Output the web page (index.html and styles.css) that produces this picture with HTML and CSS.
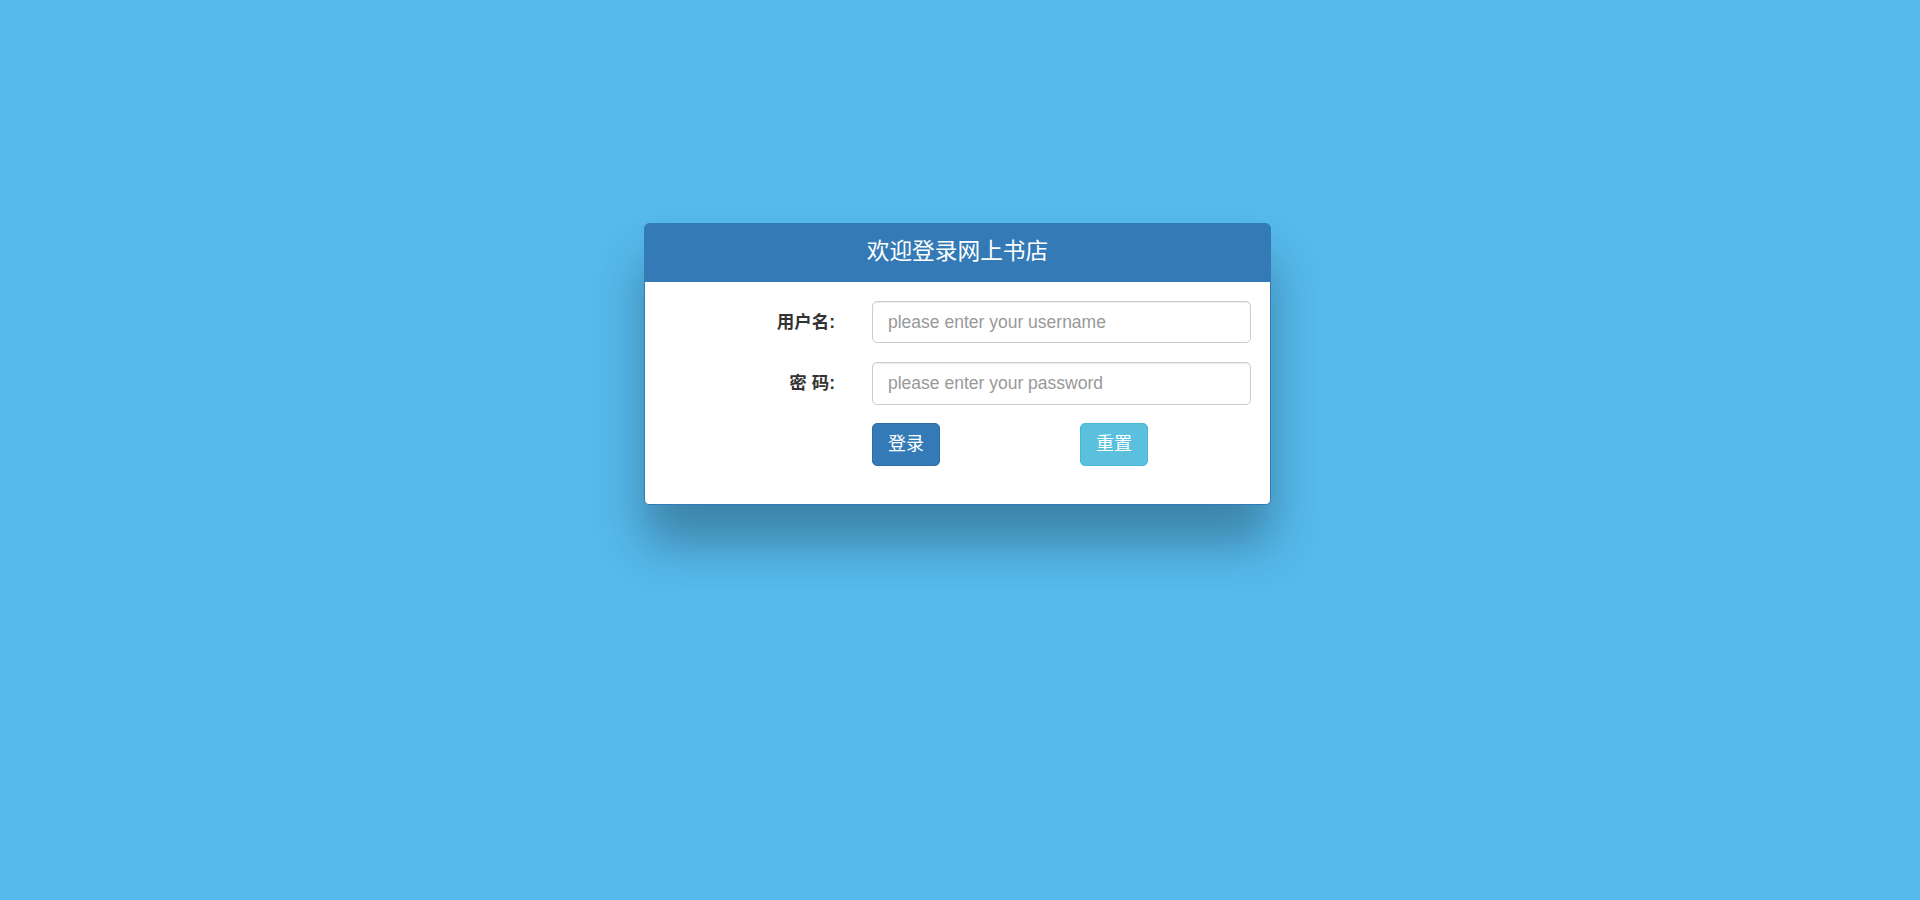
FILE: index.html
```html
<!DOCTYPE html>
<html lang="zh-CN">
<head>
<meta charset="utf-8">
<title>登录</title>
<link rel="stylesheet" href="styles.css">
</head>
<body>
<main class="panel">
  <header class="panel-heading"><h3 class="panel-title">欢迎登录网上书店</h3></header>
  <form class="panel-body">
    <label class="control-label" for="username">用户名:</label>
    <input class="form-control" id="username" type="text" placeholder="please enter your username">
    <label class="control-label" for="password">密 码:</label>
    <input class="form-control form-control-password" id="password" type="password" placeholder="please enter your password">
    <div class="actions">
      <button class="btn btn-primary" type="button">登录</button>
      <button class="btn btn-info" type="reset">重置</button>
    </div>
  </form>
</main>
</body>
</html>
```
FILE: styles.css
```css
* {
  box-sizing: border-box;
}

body {
  margin: 0;
  min-height: 900px;
  padding: 223px 0 0 644px;
  background: #56baed;
  color: #333;
  font-family: "Liberation Sans", "Noto Sans CJK SC", sans-serif;
  font-size: 17.5px;
  line-height: 25px;
}

.panel {
  width: 627px;
  height: 282px;
  border: 1px solid #337ab7;
  border-radius: 5px;
  background: #fff;
  box-shadow: 0 37.5px 50px rgba(0, 0, 0, 0.3);
}

.panel-heading {
  height: 58px;
  padding-top: 15px;
  border-radius: 3px 3px 0 0;
  background: #337ab7;
  color: #fff;
  text-align: center;
}

.panel-title {
  margin: 0;
  font-size: 22.7px;
  font-weight: 400;
  line-height: 25px;
}

.panel-body {
  display: grid;
  grid-template-columns: 190px 379px;
  grid-template-rows: 42px 43px 43px;
  column-gap: 37px;
  row-gap: 19px;
  margin: 0;
  padding: 19px 0 0;
}

.panel-body .actions {
  margin-top: -1px;
}

.control-label {
  padding-top: 9px;
  font-weight: 700;
  text-align: right;
  white-space: nowrap;
}

.form-control {
  width: 379px;
  height: 42px;
  padding: 7px 15px;
  border: 1px solid #ccc;
  border-radius: 5px;
  background: #fff;
  box-shadow: inset 0 1px 1px rgba(0, 0, 0, 0.075);
  color: #555;
  font: inherit;
}

.form-control-password {
  height: 43px;
}

.form-control::placeholder {
  color: #999;
  opacity: 1;
}

.actions {
  display: flex;
  grid-column: 2;
  gap: 140px;
}

.btn {
  width: 68px;
  height: 43px;
  padding: 0 0 1px;
  border: 1px solid;
  border-radius: 5px;
  color: #fff;
  font: inherit;
  font-size: 18px;
}

.btn-primary {
  border-color: #2e6da4;
  background: #337ab7;
}

.btn-info {
  border-color: #46b8da;
  background: #5bc0de;
}
```
